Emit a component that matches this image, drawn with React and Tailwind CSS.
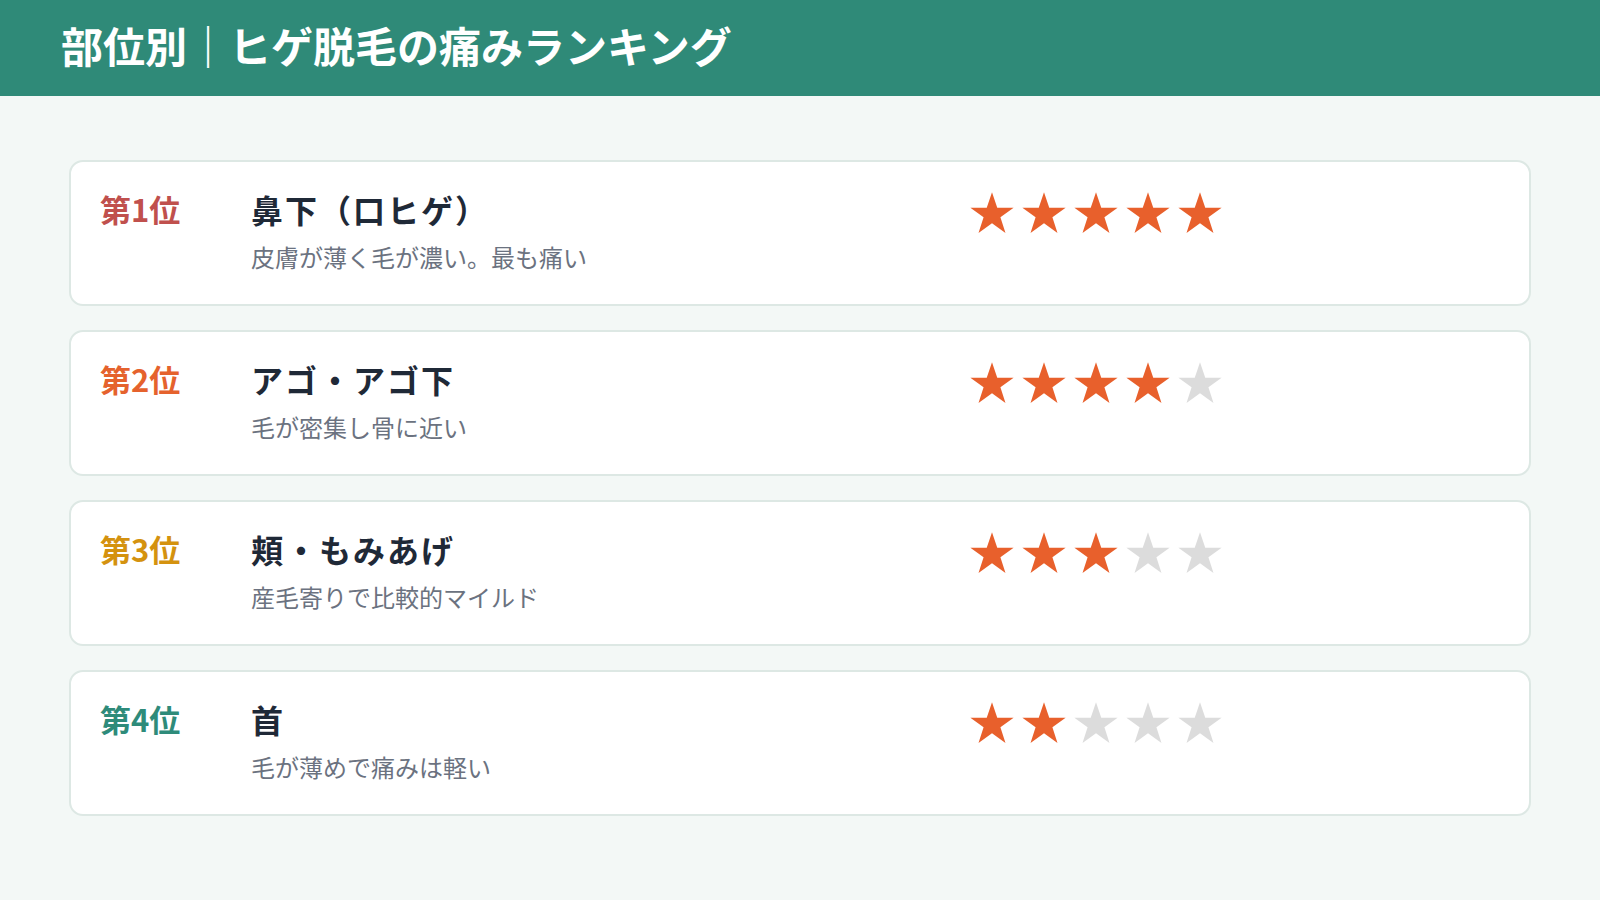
import React from "react";

const items = [
  { rank: "第1位", color: "text-[#c0504d]", title: "鼻下（口ヒゲ）", desc: "皮膚が薄く毛が濃い。最も痛い", stars: 5 },
  { rank: "第2位", color: "text-[#e5622d]", title: "アゴ・アゴ下", desc: "毛が密集し骨に近い", stars: 4 },
  { rank: "第3位", color: "text-[#d4920f]", title: "頬・もみあげ", desc: "産毛寄りで比較的マイルド", stars: 3 },
  { rank: "第4位", color: "text-[#2e8b7a]", title: "首", desc: "毛が薄めで痛みは軽い", stars: 2 },
];

function Star({ on }) {
  return (
    <svg width="46" height="44" viewBox="0 0 24 23" className="block">
      <path
        d="M12 0.6l2.75 8.1h8.55l-6.9 5.05 2.65 8.15L12 16.85 4.95 21.9l2.65-8.15L0.7 8.7h8.55z"
        fill={on ? "#e8602c" : "#dcdcdc"}
      />
    </svg>
  );
}

export default function App() {
  return (
    <div
      className="w-[1600px] h-[900px] bg-[#f3f8f6] flex flex-col"
      style={{ fontFamily: '"Noto Sans CJK JP", "Noto Sans", sans-serif' }}
    >
      <header className="h-[96px] bg-[#2f8a78] flex items-center px-[61px] pb-[6px] shrink-0">
        <h1 className="text-[42px] font-bold text-white leading-none">
          部位別｜ヒゲ脱毛の痛みランキング
        </h1>
      </header>
      <main className="flex flex-col gap-[24px] px-[69px] pt-[64px]">
        {items.map((it) => (
          <div
            key={it.rank}
            className="h-[146px] bg-white border-2 border-[#dde8e4] rounded-[14px] flex items-start pl-[29px] pt-[26px]"
          >
            <div className={`w-[151px] shrink-0 text-[31px] font-bold leading-[42px] ${it.color}`}>
              {it.rank}
            </div>
            <div className="w-[718px] shrink-0 flex flex-col">
              <div className="text-[32px] font-bold leading-[42px] tracking-[2px] text-[#1f2937]">{it.title}</div>
              <div className="mt-[10px] text-[24px] leading-[34px] text-[#6b7280]">{it.desc}</div>
            </div>
            <div className="flex gap-[6px] pt-[3px]">
              {[0, 1, 2, 3, 4].map((i) => (
                <Star key={i} on={i < it.stars} />
              ))}
            </div>
          </div>
        ))}
      </main>
    </div>
  );
}
